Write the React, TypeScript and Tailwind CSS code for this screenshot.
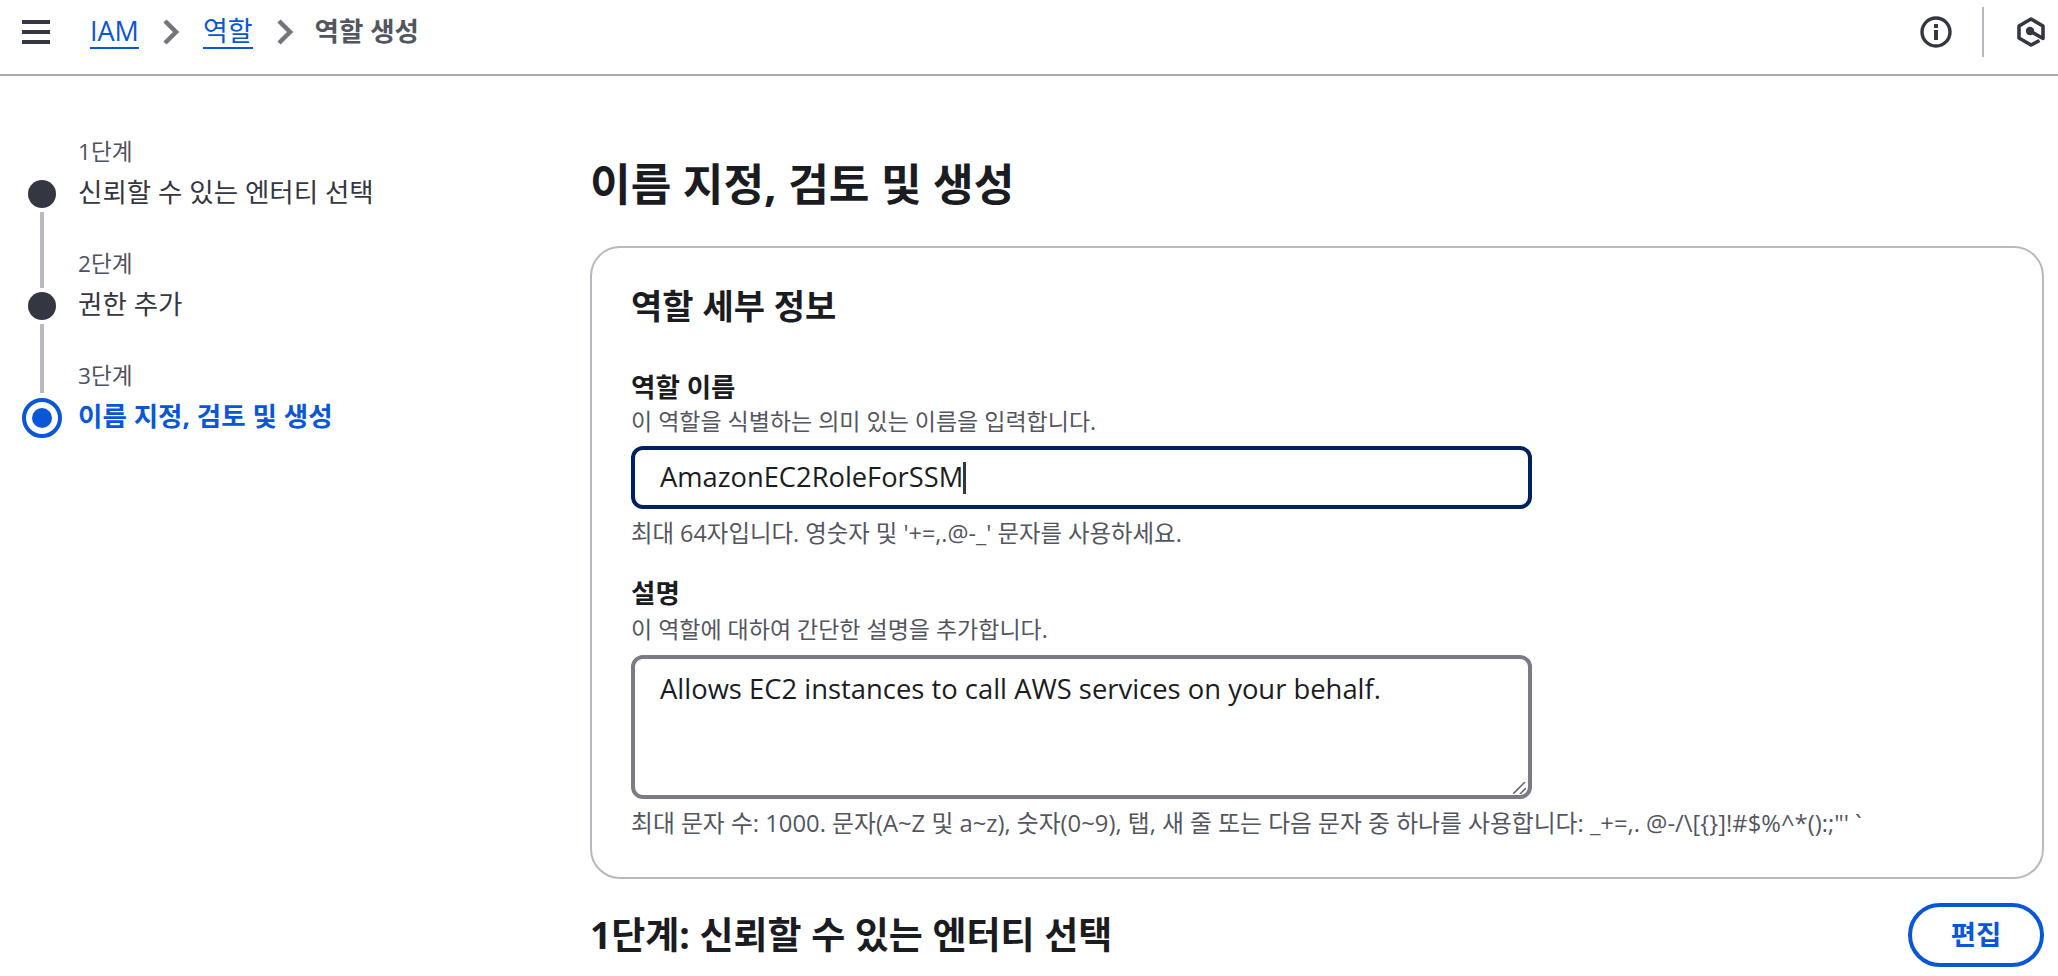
const font = { fontFamily: '"Open Sans", "Noto Sans CJK KR", sans-serif' };

function Chevron() {
  return (
    <svg className="mx-[24px]" width="16" height="26" viewBox="0 0 16 26" fill="none">
      <path d="M2 2 13 13 2 24" stroke="#74747e" strokeWidth="4.5" />
    </svg>
  );
}

function Step({ label, title, active }: { label: string; title: string; active?: boolean }) {
  return (
    <div className="h-[112px]">
      <div className="text-[22.6px] leading-[30px] text-[#4f525c]">{label}</div>
      <div className={active ? "mt-[8px] text-[26.5px] leading-[34px] font-bold text-[#0a56d9]" : "mt-[8px] text-[26.5px] leading-[34px] text-[#343741]"}>
        {title}
      </div>
    </div>
  );
}

export default function App() {
  return (
    <div style={font} className="h-[976px] w-[2058px] overflow-hidden bg-white">
      {/* top bar */}
      <header className="flex h-[76px] items-center border-b-[2px] border-[#a9a9b3] pr-[13px] pb-[10px]">
        <div className="ml-[22px] flex h-[24px] w-[28px] flex-col justify-between">
          <span className="h-[4px] bg-[#343741]" />
          <span className="h-[4px] bg-[#343741]" />
          <span className="h-[4px] bg-[#343741]" />
        </div>
        <div className="ml-[40px] flex items-center text-[27px]">
          <a className="border-b-[2px] border-[#0a56d9] leading-[32px] text-[#0a56d9]">IAM</a>
          <Chevron />
          <a className="border-b-[2px] border-[#0a56d9] leading-[32px] text-[#0a56d9]">역할</a>
          <Chevron />
          <span className="-ml-[2px] text-[26.5px] font-bold text-[#54565f]">역할 생성</span>
        </div>
        <div className="ml-auto flex items-center">
          <svg width="32" height="32" viewBox="0 0 32 32" fill="none">
            <circle cx="16" cy="16" r="14" stroke="#343741" strokeWidth="3.4" />
            <rect x="14" y="14" width="4" height="10" fill="#343741" />
            <rect x="14" y="8" width="4" height="4" fill="#343741" />
          </svg>
          <div className="mr-[33px] ml-[30px] h-[50px] w-[2px] bg-[#b8b8c2]" />
          <svg width="28" height="30" viewBox="0 0 28 30" fill="none">
            <path d="M22.5 23.5 14 28 2 21V9L14 2 26 9V21.5L13 14" stroke="#343741" strokeWidth="3.6" strokeLinejoin="round" />
            <circle cx="13" cy="14" r="4.2" fill="#343741" />
          </svg>
        </div>
      </header>

      <div className="flex">
        {/* wizard steps */}
        <aside className="flex w-[590px] shrink-0 pl-[22px]">
          <div className="flex w-[40px] flex-col items-center pt-[104px]">
            <div className="h-[28px] w-[28px] rounded-full bg-[#343741]" />
            <div className="mt-[4px] h-[76px] w-[4px] bg-[#b8b8c2]" />
            <div className="mt-[4px] h-[28px] w-[28px] rounded-full bg-[#343741]" />
            <div className="mt-[4px] h-[69px] w-[4px] bg-[#b8b8c2]" />
            <div className="mt-[5px] flex h-[40px] w-[40px] items-center justify-center rounded-full border-[4px] border-[#0a56d9]">
              <div className="h-[20px] w-[20px] rounded-full bg-[#0a56d9]" />
            </div>
          </div>
          <div className="ml-[16px] pt-[61px]">
            <Step label="1단계" title="신뢰할 수 있는 엔터티 선택" />
            <Step label="2단계" title="권한 추가" />
            <Step label="3단계" title="이름 지정, 검토 및 생성" active />
          </div>
        </aside>

        <main className="w-[1454px] shrink-0">
          <h1 className="mt-[82px] text-[44.2px] leading-[52px] font-bold text-[#1b1c22]">이름 지정, 검토 및 생성</h1>

          <section className="mt-[36px] h-[633px] rounded-[30px] border-[2px] border-[#b8b8c2] px-[39px] pt-[35px]">
            <h2 className="text-[34px] leading-[46px] font-bold text-[#1b1c22]">역할 세부 정보</h2>

            <div className="mt-[42px] text-[26.5px] leading-[32px] font-bold text-[#1b1c22]">역할 이름</div>
            <div className="mt-[2px] text-[23px] leading-[32px] text-[#54565f]">이 역할을 식별하는 의미 있는 이름을 입력합니다.</div>
            <div className="mt-[9px] flex h-[63px] w-[901px] items-center rounded-[12px] border-[4px] border-[#00205f] pl-[25px] text-[27.3px] text-[#1b1c22]">
              AmazonEC2RoleForSSM
              <span className="h-[32px] w-[3px] bg-[#343741]" />
            </div>
            <div className="mt-[8px] text-[23.4px] leading-[32px] text-[#54565f]">최대 64자입니다. 영숫자 및 '+=,.@-_' 문자를 사용하세요.</div>

            <div className="mt-[28px] text-[26.5px] leading-[32px] font-bold text-[#1b1c22]">설명</div>
            <div className="mt-[4px] text-[23px] leading-[32px] text-[#54565f]">이 역할에 대하여 간단한 설명을 추가합니다.</div>
            <div className="relative mt-[10px] h-[144px] w-[901px] rounded-[12px] border-[4px] border-[#7b7b85] pt-[11px] pl-[25px] text-[27.4px] leading-[38px] text-[#1b1c22]">
              Allows EC2 instances to call AWS services on your behalf.
              <svg className="absolute right-[2px] bottom-[1px]" width="13" height="13" viewBox="0 0 13 13" fill="none">
                <path d="M0 13 12 1M7 13 13 7" stroke="#6b6b75" strokeWidth="1.7" />
              </svg>
            </div>
            <div className="mt-[8px] text-[23.8px] leading-[32px] whitespace-nowrap text-[#54565f]">
              최대 문자 수: 1000. 문자(A~Z 및 a~z), 숫자(0~9), 탭, 새 줄 또는 다음 문자 중 하나를 사용합니다: _+=,. @-/\[{"{}"}]!#$%^*():;"' `
            </div>
          </section>

          <div className="mt-[24px] flex items-center justify-between">
            <h2 className="text-[37px] leading-[46px] font-bold text-[#1b1c22]">1단계: 신뢰할 수 있는 엔터티 선택</h2>
            <button className="h-[64px] w-[136px] rounded-full border-[4px] border-[#0a56d9] text-[27.5px] font-bold text-[#0a56d9]">편집</button>
          </div>
        </main>
      </div>
    </div>
  );
}
